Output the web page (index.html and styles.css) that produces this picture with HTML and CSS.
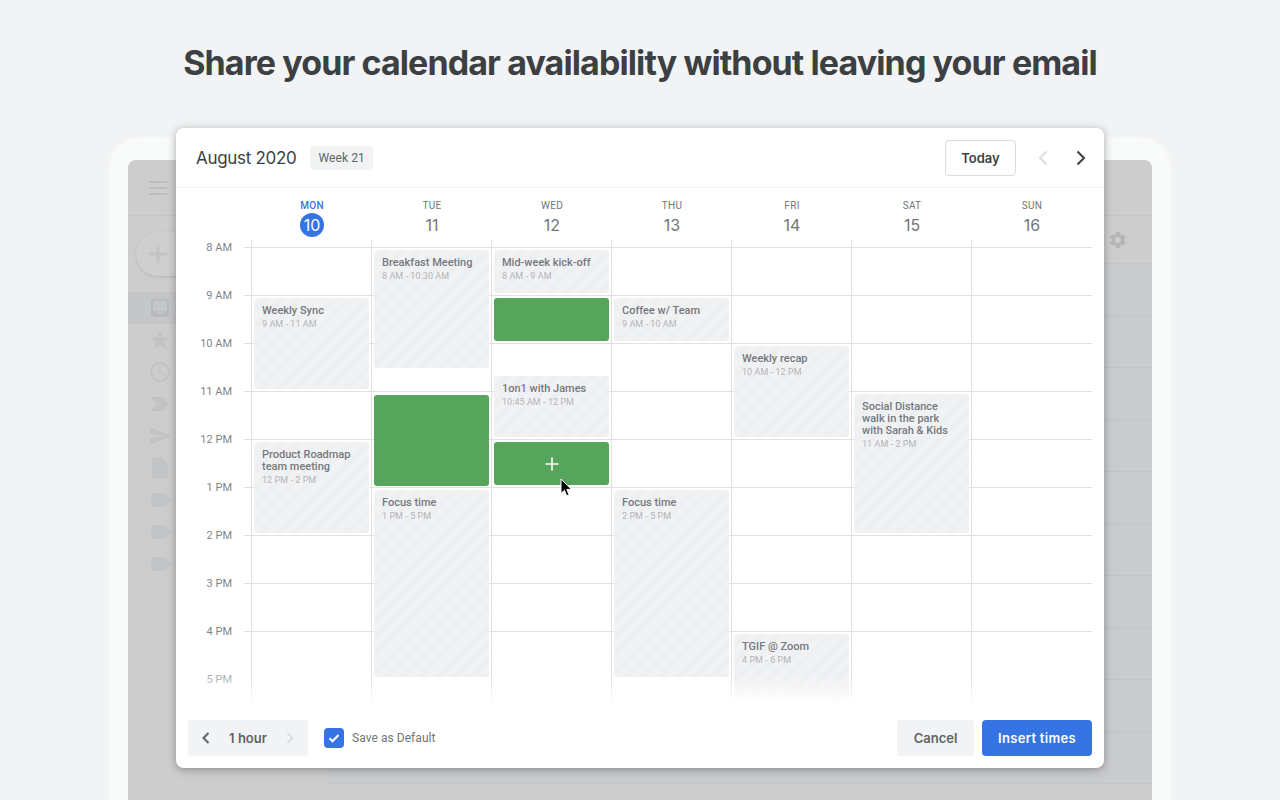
FILE: index.html
```html
<!DOCTYPE html>
<html lang="en">
<head>
<meta charset="UTF-8">
<title>Share your calendar availability</title>
<link rel="stylesheet" href="styles.css">
</head>
<body>
    <h1 class="headline">Share your calendar availability without leaving your email</h1>

    <div class="device">
        <div class="screen">
            <div class="mail-top">
                <div class="burger"><span></span><span></span><span></span></div>
            </div>
            <div class="mail-body">
                <div class="mail-side">
                    <div class="compose">
                        <svg viewBox="0 0 24 24"><path d="M21 13.5h-7.5V21h-3v-7.5H3v-3h7.5V3h3v7.5H21z"/></svg>
                    </div>
                    <div class="side-row side-row-on"><svg viewBox="0 0 24 24"><path d="M19 3H5c-1.1 0-2 .9-2 2v14c0 1.1.9 2 2 2h14c1.1 0 2-.9 2-2V5c0-1.1-.9-2-2-2zm0 12h-4c0 1.66-1.35 3-3 3s-3-1.34-3-3H5V5h14v10z"/></svg></div>
                    <div class="side-row"><svg viewBox="0 0 24 24"><path d="M12 17.27L18.18 21l-1.64-7.03L22 9.24l-7.19-.61L12 2 9.19 8.63 2 9.24l5.46 4.73L5.82 21z"/></svg></div>
                    <div class="side-row"><svg viewBox="0 0 24 24"><path d="M11.99 2C6.47 2 2 6.48 2 12s4.47 10 9.99 10C17.52 22 22 17.52 22 12S17.52 2 11.99 2zM12 20c-4.42 0-8-3.58-8-8s3.58-8 8-8 8 3.58 8 8-3.58 8-8 8zm.5-13H11v6l5.25 3.15.75-1.23-4.5-2.67z"/></svg></div>
                    <div class="side-row"><svg viewBox="0 0 24 24"><path d="M3.5 18.99l11 .01c.67 0 1.27-.33 1.63-.84L20.5 12l-4.37-6.16c-.36-.51-.96-.84-1.63-.84l-11 .01L8.34 12z"/></svg></div>
                    <div class="side-row"><svg viewBox="0 0 24 24"><path d="M2.01 21L23 12 2.01 3 2 10l15 2-15 2z"/></svg></div>
                    <div class="side-row"><svg viewBox="0 0 24 24"><path d="M14 2H6c-1.1 0-2 .9-2 2v16c0 1.1.9 2 2 2h12c1.1 0 2-.9 2-2V8l-6-6z"/></svg></div>
                    <div class="side-row"><svg viewBox="0 0 24 24"><path d="M17.63 5.84C17.27 5.33 16.67 5 16 5L5 5.01C3.9 5.01 3 5.9 3 7v10c0 1.1.9 1.99 2 1.99L16 19c.67 0 1.27-.33 1.63-.84L22 12l-4.37-6.16z"/></svg></div>
                    <div class="side-row"><svg viewBox="0 0 24 24"><path d="M17.63 5.84C17.27 5.33 16.67 5 16 5L5 5.01C3.9 5.01 3 5.9 3 7v10c0 1.1.9 1.99 2 1.99L16 19c.67 0 1.27-.33 1.63-.84L22 12l-4.37-6.16z"/></svg></div>
                    <div class="side-row"><svg viewBox="0 0 24 24"><path d="M17.63 5.84C17.27 5.33 16.67 5 16 5L5 5.01C3.9 5.01 3 5.9 3 7v10c0 1.1.9 1.99 2 1.99L16 19c.67 0 1.27-.33 1.63-.84L22 12l-4.37-6.16z"/></svg></div>
                </div>
                <div class="mail-main">
                    <div class="mail-tools">
                        <svg class="gear" viewBox="0 0 24 24"><path d="M19.14 12.94c.04-.3.06-.61.06-.94 0-.32-.02-.64-.07-.94l2.03-1.58c.18-.14.23-.41.12-.61l-1.92-3.32c-.12-.22-.37-.29-.59-.22l-2.39.96c-.5-.38-1.03-.7-1.62-.94l-.36-2.54c-.04-.24-.24-.41-.48-.41h-3.84c-.24 0-.43.17-.47.41l-.36 2.54c-.59.24-1.13.57-1.62.94l-2.39-.96c-.22-.08-.47 0-.59.22L2.74 8.87c-.12.21-.08.47.12.61l2.03 1.58c-.05.3-.09.63-.09.94s.02.64.07.94l-2.03 1.58c-.18.14-.23.41-.12.61l1.92 3.32c.12.22.37.29.59.22l2.39-.96c.5.38 1.03.7 1.62.94l.36 2.54c.05.24.24.41.48.41h3.84c.24 0 .44-.17.47-.41l.36-2.54c.59-.24 1.13-.56 1.62-.94l2.39.96c.22.08.47 0 .59-.22l1.92-3.32c.12-.22.07-.47-.12-.61l-2.01-1.58zM12 15.6c-1.98 0-3.6-1.62-3.6-3.6s1.62-3.6 3.6-3.6 3.6 1.62 3.6 3.6-1.62 3.6-3.6 3.6z"/></svg>
                    </div>
                    <div class="mail-row"></div>
                    <div class="mail-row"></div>
                    <div class="mail-row"></div>
                    <div class="mail-row"></div>
                    <div class="mail-row"></div>
                    <div class="mail-row"></div>
                    <div class="mail-row"></div>
                    <div class="mail-row"></div>
                    <div class="mail-row"></div>
                    <div class="mail-row"></div>
                </div>
            </div>
        </div>

        <div class="picker">
            <div class="picker-head">
                <span class="month">August 2020</span>
                <span class="week">Week 21</span>
                <button class="btn-today">Today</button>
                <svg class="nav-arrow nav-prev" viewBox="0 0 12 18"><path d="M9.5 2.5L3 9l6.5 6.5"/></svg>
                <svg class="nav-arrow nav-next" viewBox="0 0 12 18"><path d="M2.5 2.5L9 9l-6.5 6.5"/></svg>
            </div>

            <div class="day-heads">
                <div class="day-head day-today"><span class="dow">MON</span><span class="dnum">10</span></div>
                <div class="day-head"><span class="dow">TUE</span><span class="dnum">11</span></div>
                <div class="day-head"><span class="dow">WED</span><span class="dnum">12</span></div>
                <div class="day-head"><span class="dow">THU</span><span class="dnum">13</span></div>
                <div class="day-head"><span class="dow">FRI</span><span class="dnum">14</span></div>
                <div class="day-head"><span class="dow">SAT</span><span class="dnum">15</span></div>
                <div class="day-head"><span class="dow">SUN</span><span class="dnum">16</span></div>
            </div>

            <div class="week-grid">
                <div class="hours">
                    <div class="hour">8 AM</div>
                    <div class="hour">9 AM</div>
                    <div class="hour">10 AM</div>
                    <div class="hour">11 AM</div>
                    <div class="hour">12 PM</div>
                    <div class="hour">1 PM</div>
                    <div class="hour">2 PM</div>
                    <div class="hour">3 PM</div>
                    <div class="hour">4 PM</div>
                    <div class="hour">5 PM</div>
                </div>

                <div class="day">
                    <div class="event" style="top:58px;height:91px"><b>Weekly Sync</b><i>9 AM - 11 AM</i></div>
                    <div class="event" style="top:202px;height:91px"><b>Product Roadmap team meeting</b><i>12 PM - 2 PM</i></div>
                </div>
                <div class="day">
                    <div class="event" style="top:10px;height:118px"><b>Breakfast Meeting</b><i>8 AM - 10:30 AM</i></div>
                    <div class="slot" style="top:155px;height:91px"></div>
                    <div class="event" style="top:250px;height:187px"><b>Focus time</b><i>1 PM - 5 PM</i></div>
                </div>
                <div class="day">
                    <div class="event" style="top:10px;height:43px"><b>Mid-week kick-off</b><i>8 AM - 9 AM</i></div>
                    <div class="slot" style="top:58px;height:43px"></div>
                    <div class="event" style="top:136px;height:61px"><b>1on1 with James</b><i>10:45 AM - 12 PM</i></div>
                    <div class="slot slot-hover" style="top:202px;height:43px">
                        <svg viewBox="0 0 14 14"><path d="M7 .5v13M.5 7h13"/></svg>
                    </div>
                </div>
                <div class="day">
                    <div class="event" style="top:58px;height:43px"><b>Coffee w/ Team</b><i>9 AM - 10 AM</i></div>
                    <div class="event" style="top:250px;height:187px"><b>Focus time</b><i>2 PM - 5 PM</i></div>
                </div>
                <div class="day">
                    <div class="event" style="top:106px;height:91px"><b>Weekly recap</b><i>10 AM - 12 PM</i></div>
                    <div class="event" style="top:394px;height:91px"><b>TGIF @ Zoom</b><i>4 PM - 6 PM</i></div>
                </div>
                <div class="day">
                    <div class="event" style="top:154px;height:139px"><b>Social Distance walk in the park with Sarah &amp; Kids</b><i>11 AM - 2 PM</i></div>
                </div>
                <div class="day day-last"></div>

                <svg class="cursor" viewBox="0 0 12 19"><path d="M1 1v14.5l3.4-3.2 2.3 5.4 2.4-1-2.3-5.3h4.7z"/></svg>
            </div>

            <div class="picker-foot">
                <div class="duration">
                    <svg class="dur-arrow" viewBox="0 0 12 18"><path d="M8.5 4L3.5 9l5 5"/></svg>
                    <span>1 hour</span>
                    <svg class="dur-arrow dur-off" viewBox="0 0 12 18"><path d="M3.5 4l5 5-5 5"/></svg>
                </div>
                <label class="save-default">
                    <span class="check"><svg viewBox="0 0 20 20"><path d="M5.5 10.2l3 3 6-6.2"/></svg></span>
                    Save as Default
                </label>
                <button class="btn-cancel">Cancel</button>
                <button class="btn-insert">Insert times</button>
            </div>
        </div>
    </div>
</body>
</html>
```

FILE: styles.css
```css
html, body {
    height: 800px;
}

body {
    margin: 0;
    overflow: hidden;
    background-color: #f1f3f4;
    color: #3c4043;
    font-family: 'Roboto', 'Liberation Sans', sans-serif;
}

.headline {
    margin: 0;
    padding: 41px 0 51px;
    font-family: 'Inter', 'Liberation Sans', sans-serif;
    font-size: 34px;
    font-weight: 700;
    line-height: 44px;
    letter-spacing: -0.9px;
    text-align: center;
    color: #3c4043;
}

/* tablet behind the dialog */
.device {
    position: relative;
    margin: 0 108px;
    height: 700px;
    box-sizing: border-box;
    padding: 22px 18px 0;
    background: #f9fafa;
    border: 2px solid #f5f6f7;
    border-bottom: 0;
    border-radius: 32px 32px 0 0;
}

.screen {
    height: 100%;
    border-radius: 8px 8px 0 0;
    background: #cdcdcd;
    overflow: hidden;
}

.mail-top {
    height: 55px;
    border-bottom: 1px solid #c4c5c6;
    display: flex;
    align-items: center;
    padding-left: 21px;
}

.burger span {
    display: block;
    width: 18px;
    height: 2px;
    margin: 4px 0;
    background: #bdbebf;
}

.mail-body {
    display: flex;
}

.mail-side {
    width: 200px;
    flex-shrink: 0;
}

.compose {
    width: 120px;
    height: 44px;
    margin: 16px 0 16px 8px;
    border-radius: 22px;
    background: #cfcfcf;
    box-shadow: 0 1px 3px rgba(0, 0, 0, 0.12);
    display: flex;
    align-items: center;
    padding-left: 10px;
    box-sizing: border-box;
}

.compose svg {
    width: 24px;
    height: 24px;
    fill: #c2c3c4;
}

.side-row {
    height: 32px;
    display: flex;
    align-items: center;
    padding-left: 20px;
}

.side-row-on {
    background: #c5c6c8;
}

.side-row svg {
    width: 24px;
    height: 24px;
    fill: #c2c3c5;
}

.side-row-on svg {
    fill: #b9babc;
}

.mail-main {
    flex: 1;
    background: #cacbcd;
}

.mail-tools {
    height: 47px;
    background: #cdcdcd;
    border-bottom: 1px solid #c4c5c6;
    display: flex;
    align-items: center;
    justify-content: flex-end;
    padding-right: 24px;
}

.gear {
    width: 20px;
    height: 20px;
    fill: #b4b5b7;
}

.mail-row {
    height: 51px;
    border-bottom: 1px solid #c4c5c7;
}

/* dialog */
.picker {
    position: absolute;
    top: -10px;
    left: 66px;
    width: 928px;
    height: 640px;
    display: flex;
    flex-direction: column;
    background: #fff;
    border-radius: 8px;
    box-shadow: 0 2px 8px rgba(60, 64, 67, 0.45);
}

.picker-head {
    height: 59px;
    flex-shrink: 0;
    display: flex;
    align-items: center;
    padding: 0 12px 0 20px;
    border-bottom: 1px solid #f1f3f4;
}

.month {
    font-family: 'Inter', 'Liberation Sans', sans-serif;
    font-size: 17px;
    letter-spacing: -0.3px;
    color: #3c4043;
}

.week {
    margin-left: 14px;
    padding: 0 8px;
    height: 24px;
    line-height: 24px;
    border-radius: 4px;
    background: #f1f3f4;
    font-size: 12px;
    letter-spacing: 0.1px;
    color: #5f6368;
}

.btn-today {
    margin-left: auto;
    width: 71px;
    height: 36px;
    padding: 0;
    border: 1px solid #dadce0;
    border-radius: 4px;
    background: #fff;
    font-family: 'Inter', 'Liberation Sans', sans-serif;
    font-size: 13px;
    font-weight: 600;
    color: #3c4043;
}

.nav-arrow {
    width: 12px;
    height: 18px;
    fill: none;
    stroke-width: 2;
}

.nav-prev {
    margin-left: 21px;
    stroke: #dadce0;
}

.nav-next {
    margin-left: 26px;
    margin-right: 5px;
    stroke: #3c4043;
}

.day-heads {
    height: 52px;
    flex-shrink: 0;
    display: flex;
    padding-left: 76px;
}

.day-head {
    width: 120px;
    display: flex;
    flex-direction: column;
    align-items: center;
    padding-top: 11px;
    box-sizing: border-box;
}

.dow {
    font-size: 10px;
    line-height: 14px;
    font-weight: 400;
    letter-spacing: 0.3px;
    color: #70757a;
}

.dnum {
    width: 24px;
    height: 24px;
    line-height: 24px;
    text-align: center;
    border-radius: 50%;
    font-family: 'Inter', 'Liberation Sans', sans-serif;
    font-size: 16px;
    color: #70757a;
}

.day-today .dow {
    color: #3574e2;
    font-weight: 500;
}

.day-today .dnum {
    background: #3574e2;
    color: #fff;
}

.week-grid {
    position: relative;
    height: 464px;
    flex-shrink: 0;
    display: flex;
    overflow: hidden;
}

/* fade the bottom of the calendar into the footer */
.week-grid::after {
    content: '';
    position: absolute;
    left: 0;
    right: 0;
    bottom: 0;
    height: 28px;
    background: linear-gradient(rgba(255, 255, 255, 0), #fff);
    pointer-events: none;
}

.hours {
    width: 75px;
    flex-shrink: 0;
    background: repeating-linear-gradient(#0000 0, #0000 47px, #e0e0e0 47px, #e0e0e0 48px);
    background-size: 7px 100%;
    background-position: right 0 top -40px;
    background-repeat: repeat-y;
}

.hour {
    height: 48px;
    padding-right: 19px;
    text-align: right;
    font-size: 11px;
    line-height: 16px;
    color: #80868b;
}

.hour:last-child {
    color: #abaeb2;
}

.day {
    position: relative;
    width: 120px;
    box-sizing: border-box;
    border-left: 1px solid #e0e0e0;
    background: repeating-linear-gradient(transparent 0, transparent 47px, #e0e0e0 47px, #e0e0e0 48px);
    background-position: 0 -40px;
}

.day-last {
    width: 121px;
}

.event,
.slot {
    position: absolute;
    left: 2px;
    width: 115px;
    box-sizing: border-box;
    border-radius: 3px;
}

.event {
    padding: 7px 8px;
    background: repeating-linear-gradient(135deg, #f1f2f4 0, #f1f2f4 6px, #edeff1 6px, #edeff1 12px);
    font-size: 11px;
    line-height: 12px;
}

.event b {
    display: block;
    font-weight: 500;
    color: #76797d;
}

.event i {
    display: block;
    margin-top: 1px;
    font-style: normal;
    font-size: 9px;
    color: #b3b5b8;
    letter-spacing: 0.05px;
}

.slot {
    background: #57a55c;
}

.slot-hover {
    display: flex;
    align-items: center;
    justify-content: center;
}

.slot-hover svg {
    width: 14px;
    height: 14px;
    fill: none;
    stroke: #fff;
    stroke-width: 1.6;
}

.cursor {
    position: absolute;
    left: 384px;
    top: 238px;
    width: 12px;
    height: 19px;
    fill: #000;
    stroke: #fff;
    stroke-width: 1;
    z-index: 2;
}

.picker-foot {
    flex: 1;
    display: flex;
    align-items: flex-start;
    padding: 16px 12px 0;
}

.duration {
    width: 120px;
    height: 36px;
    box-sizing: border-box;
    padding: 0 12px;
    display: flex;
    align-items: center;
    justify-content: space-between;
    border-radius: 4px;
    background: #f1f3f4;
    font-family: 'Inter', 'Liberation Sans', sans-serif;
    font-size: 13px;
    font-weight: 600;
    color: #5f6368;
}

.dur-arrow {
    width: 12px;
    height: 18px;
    fill: none;
    stroke: #5f6368;
    stroke-width: 2;
}

.dur-off {
    stroke: #dadce0;
}

.save-default {
    margin-left: 16px;
    height: 36px;
    display: flex;
    align-items: center;
    font-size: 12px;
    letter-spacing: 0.05px;
    color: #70757a;
}

.check {
    width: 20px;
    height: 20px;
    margin-right: 8px;
    border-radius: 4px;
    background: #3574e2;
}

.check svg {
    display: block;
    width: 20px;
    height: 20px;
    fill: none;
    stroke: #fff;
    stroke-width: 2;
}

.btn-cancel,
.btn-insert {
    height: 36px;
    padding: 0;
    border: 0;
    border-radius: 4px;
    font-family: 'Inter', 'Liberation Sans', sans-serif;
    font-size: 13px;
    font-weight: 600;
}

.btn-cancel {
    margin-left: auto;
    width: 77px;
    background: #f1f3f4;
    color: #5f6368;
}

.btn-insert {
    margin-left: 8px;
    width: 110px;
    background: #3574e2;
    color: #fff;
    letter-spacing: 0.3px;
}
```
